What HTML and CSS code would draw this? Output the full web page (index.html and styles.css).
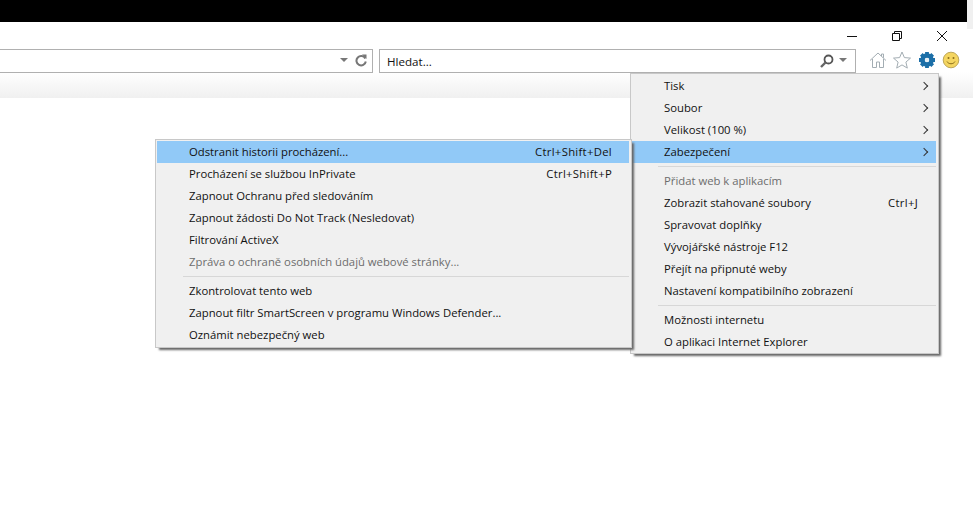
FILE: index.html
```html
<!DOCTYPE html>
<html lang="cs">
<head>
<meta charset="utf-8">
<title>Internet Explorer</title>
<link rel="stylesheet" href="styles.css">
</head>
<body>
<div class="topbar"><div class="blackbar"></div><div class="edge"></div></div>
<div class="titlebar">
  <svg class="winbtn" width="12" height="12" viewBox="0 0 12 12"><path d="M1 6.500h10" stroke="#111" fill="none"/></svg>
  <svg class="winbtn" width="12" height="12" viewBox="0 0 12 12"><path d="M1.500 3.500h7v7h-7zM3.500 3.500v-2h7v7h-2" stroke="#111" fill="none"/></svg>
  <svg class="winbtn" width="12" height="12" viewBox="0 0 12 12"><path d="M1 1l10 10M11 1L1 11" stroke="#111" fill="none"/></svg>
</div>
<div class="toolbar">
  <div class="addr">
    <svg class="drop" width="8" height="5" viewBox="0 0 8 5"><path d="M0 0h8L4 4z" fill="#777"/></svg>
    <svg width="12" height="13" viewBox="0 0 12 13"><path d="M10.300 4.500A4.700 4.700 0 1 0 10.800 7.500" fill="none" stroke="#777" stroke-width="2"/><path d="M7 .5l4.500 0v4.500z" fill="#777"/></svg>
  </div>
  <div class="search">
    <span class="hint">Hledat...</span>
    <svg width="14" height="14" viewBox="0 0 14 14"><circle cx="8.500" cy="5.500" r="4" fill="none" stroke="#555" stroke-width="1.800"/><path d="M5.500 8.500l-4.500 4.500" stroke="#666" stroke-width="2.400"/></svg>
    <svg class="drop" width="8" height="5" viewBox="0 0 8 5"><path d="M0 0h8L4 4z" fill="#777"/></svg>
  </div>
  <div class="icons">
    <svg width="18" height="18" viewBox="0 0 18 18"><path d="M1 9.500L9 2l8 7.500M3.500 8v8.500h4V11h3v5.500h4V8M12.500 5V3H14.500v3.800" fill="none" stroke="#a3adb3"/></svg>
    <svg width="18" height="18" viewBox="0 0 18 18"><path d="M9 1l2.400 5.600 6.100.5-4.600 4 1.400 6L9 13.900 3.700 17.100l1.400-6-4.600-4 6.100-.5z" fill="#fff" stroke="#a3adb3"/></svg>
    <svg width="18" height="18" viewBox="0 0 18 18"><circle cx="9" cy="9" r="4.500" fill="none" stroke="#1c6fa8" stroke-width="4.500"/><path d="M9 1v4M9 13v4M1 9h4M13 9h4M3.300 3.300l3 3M11.700 11.700l3 3M14.700 3.300l-3 3M6.300 11.700l-3 3" stroke="#1c6fa8" stroke-width="3.800"/><circle cx="9" cy="9" r="2" fill="#e6eff5"/></svg>
    <svg width="18" height="18" viewBox="0 0 18 18"><circle cx="9" cy="9" r="7.800" fill="#f4d560" stroke="#bda75a"/><circle cx="6.500" cy="7" r="1" fill="#8a6d1b"/><circle cx="11.500" cy="7" r="1" fill="#8a6d1b"/><path d="M5 10.500c1.500 3 6.500 3 8 0" fill="none" stroke="#8a6d1b"/></svg>
  </div>
</div>
<div class="tabstrip"></div>

<nav class="menu menu-main">
  <div class="item"><span>Tisk</span><i class="arrow"></i></div>
  <div class="item"><span>Soubor</span><i class="arrow"></i></div>
  <div class="item"><span>Velikost (100 %)</span><i class="arrow"></i></div>
  <div class="item active"><span>Zabezpečení</span><i class="arrow"></i></div>
  <div class="sep"></div>
  <div class="item off"><span>Přidat web k aplikacím</span></div>
  <div class="item"><span>Zobrazit stahované soubory</span><span class="key">Ctrl+J</span></div>
  <div class="item"><span>Spravovat doplňky</span></div>
  <div class="item"><span>Vývojářské nástroje F12</span></div>
  <div class="item"><span>Přejít na připnuté weby</span></div>
  <div class="item"><span>Nastavení kompatibilního zobrazení</span></div>
  <div class="sep"></div>
  <div class="item"><span>Možnosti internetu</span></div>
  <div class="item"><span>O aplikaci Internet Explorer</span></div>
</nav>

<nav class="menu menu-sub">
  <div class="item active"><span>Odstranit historii procházení...</span><span class="key">Ctrl+Shift+Del</span></div>
  <div class="item"><span>Procházení se službou InPrivate</span><span class="key">Ctrl+Shift+P</span></div>
  <div class="item"><span>Zapnout Ochranu před sledováním</span></div>
  <div class="item"><span>Zapnout žádosti Do Not Track (Nesledovat)</span></div>
  <div class="item"><span>Filtrování ActiveX</span></div>
  <div class="item off"><span>Zpráva o ochraně osobních údajů webové stránky...</span></div>
  <div class="sep"></div>
  <div class="item"><span>Zkontrolovat tento web</span></div>
  <div class="item"><span>Zapnout filtr SmartScreen v programu Windows Defender...</span></div>
  <div class="item"><span>Oznámit nebezpečný web</span></div>
</nav>
</body>
</html>
```
FILE: styles.css
```css
* { box-sizing: border-box; }
html, body { margin: 0; height: 100%; background: #fff; overflow: hidden; }
body { font: 11.3px/22px "Open Sans", "Noto Sans", sans-serif; color: #111; position: relative; }
.topbar { height: 22px; display: flex; }
.blackbar { flex: 1; background: #000; }
.edge { width: 6px; height: 29px; background: #f0f0f0; }
.titlebar { height: 25px; display: flex; justify-content: flex-end; align-items: center; gap: 33px; padding: 2px 25px 0 0; }
.toolbar { height: 25px; display: flex; align-items: center; }
.addr { width: 374px; margin: 2px 0 0 -1px; height: 24px; border: 1px solid #b0b0b0; display: flex; align-items: center; justify-content: flex-end; gap: 7px; padding-right: 5px; }
.search { width: 477px; margin: 2px 0 0 6px; height: 24px; border: 1px solid #b0b0b0; display: flex; align-items: center; gap: 5px; padding: 0 8px 0 7px; }
.hint { flex: 1; padding-top: 2px; font-size: 11.600px; }
.icons { display: flex; gap: 6.400px; margin-left: 13px; }
.tabstrip { height: 26px; background: linear-gradient(#fff, #f0f0f0); }
.menu { position: absolute; background: #f0f0f0; border: 1px solid #c8c8c8; box-shadow: 3px 3px 2px -1px #666; padding: 1px 2px 1px 1px; }
.menu-main { left: 630px; top: 73px; width: 309px; height: 281px; }
.menu-sub { left: 155px; top: 139px; width: 477px; height: 209px; }
.item { height: 22px; display: flex; align-items: center; justify-content: space-between; padding: 0 17px 0 32px; white-space: nowrap; }
.menu-main .item { padding-right: 18px; }
.active { background: #91c9f7; }
.off { color: #6d6d6d; }
.key { margin-left: 20px; letter-spacing: .3px; }
.arrow { width: 6px; height: 6px; border-top: 1px solid #333; border-right: 1px solid #333; transform: rotate(45deg); margin-right: -9px; }
.sep { height: 1px; margin: 3px 0 3px 26px; background: #d7d7d7; }
```
